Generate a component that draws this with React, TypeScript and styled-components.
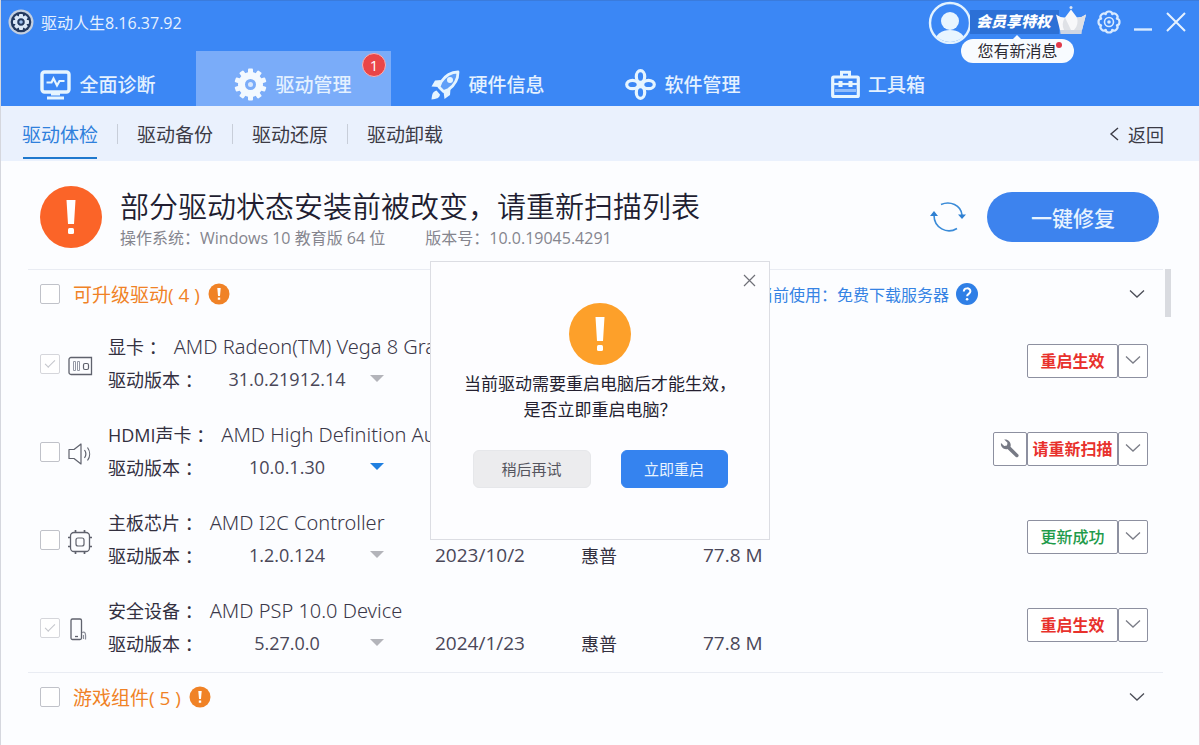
import React from "react";
import styled, { createGlobalStyle, css } from "styled-components";

const GlobalStyle = createGlobalStyle`
  *, *::before, *::after { box-sizing: border-box; }
  body {
    margin: 0;
    background: #fcfdff;
    color: #33303f;
    font-family: "Open Sans", "Noto Sans CJK SC", sans-serif;
  }
  button, input, select { font: inherit; color: inherit; }
  button { cursor: pointer; }
`;

const BLUE = "#3b87f5";

const Window = styled.div`
  position: relative;
  min-height: 100vh;
  border-left: 1px solid #d5d7de;
  border-right: 1px solid #ecd2dc;
  overflow: hidden;
`;

const IconButton = styled.button`
  display: flex;
  align-items: center;
  justify-content: center;
  padding: 0;
  border: 0;
  background: none;
`;

/* ---------- header ---------- */

const Header = styled.header`
  background: ${BLUE};
  border-top: 1px solid #3a7bdc;
  color: #fff;
`;

const TitleBar = styled.div`
  display: flex;
  align-items: center;
  height: 42px;
  padding: 0 12px 0 7px;
`;

const AppName = styled.span`
  margin-left: 7px;
  font-size: 16px;
  color: #e6f1ff;
`;

const Member = styled.div`
  position: relative;
  display: flex;
  align-items: center;
  margin-left: auto;
`;

const MemberLabel = styled.a`
  height: 24px;
  margin-left: -2px;
  padding: 0 8px 0 6px;
  background: #2c70d6;
  color: #fff;
  font-size: 15px;
  font-style: italic;
  font-weight: 900;
  line-height: 23px;
  text-decoration: none;
`;

const Crown = styled.svg`
  margin: -4px 0 0 -4px;
`;

const Bubble = styled.div`
  position: absolute;
  top: 39px;
  left: 33px;
  z-index: 2;
  width: 113px;
  border-radius: 12px;
  background: #f8fbff;
  color: #2c2a33;
  font-size: 16px;
  line-height: 24px;
  text-align: center;

  &::before {
    content: "";
    position: absolute;
    top: -4px;
    left: 51px;
    border: 5px solid transparent;
    border-top: 0;
    border-bottom-color: #f8fbff;
  }
`;

const RedDot = styled.i`
  position: absolute;
  top: 3px;
  right: 12px;
  width: 6px;
  height: 6px;
  border-radius: 50%;
  background: #e0394a;
`;

const WindowTools = styled.div`
  display: flex;
  align-items: center;
  gap: 12px;
  margin-left: 10px;
`;

const Nav = styled.nav`
  display: flex;
  padding-top: 8px;
`;

const NavTab = styled.a<{ $active?: boolean }>`
  position: relative;
  display: flex;
  align-items: center;
  justify-content: center;
  gap: 8px;
  width: 195px;
  height: 55px;
  padding: 12px 1px 0 0;
  background: ${(p) => (p.$active ? "#7aacf9" : "transparent")};
  color: #e4f1ff;
  font-size: 19px;
  line-height: 28px;
  font-weight: 500;
  text-decoration: none;
`;

const Badge = styled.span`
  position: absolute;
  top: 2px;
  right: 5px;
  width: 24px;
  height: 24px;
  border: 1px solid #f6b3b6;
  border-radius: 50%;
  background: #ea4548;
  color: #fff;
  font-size: 15px;
  line-height: 22px;
  text-align: center;
`;

/* ---------- secondary navigation ---------- */

const SubBar = styled.div`
  display: flex;
  align-items: stretch;
  justify-content: space-between;
  height: 55px;
  padding: 0 35px 0 21px;
  background: #eaf1fd;
`;

const SubTabs = styled.nav`
  display: flex;
  align-items: center;
`;

const SubTab = styled.a<{ $active?: boolean }>`
  position: relative;
  height: 55px;
  color: ${(p) => (p.$active ? "#2f80dc" : "#3b3a45")};
  font-size: 19px;
  line-height: 58px;
  text-decoration: none;

  ${(p) =>
    p.$active &&
    css`
      &::after {
        content: "";
        position: absolute;
        right: 1px;
        bottom: 2px;
        left: 1px;
        height: 2px;
        background: #1f78cd;
      }
    `}
`;

const SubDivider = styled.span`
  width: 1px;
  height: 20px;
  margin: 0 19px;
  background: #c8ced9;
`;

const BackLink = styled.a`
  display: flex;
  align-items: center;
  gap: 9px;
  color: #3b3a45;
  font-size: 18px;
  text-decoration: none;
`;

/* ---------- status ---------- */

const Status = styled.section`
  display: flex;
  align-items: center;
  padding: 25px 40px 21px 39px;
`;

const StatusText = styled.div`
  flex: 1;
  margin-left: 18px;
`;

const StatusTitle = styled.h1`
  margin: 0;
  color: #211d31;
  font-size: 29px;
  font-weight: 350;
  line-height: 42px;
`;

const StatusMeta = styled.p`
  display: flex;
  gap: 40px;
  margin: 0;
  color: #85858e;
  font-size: 16px;
  line-height: 20px;
`;

const RepairButton = styled.button`
  width: 172px;
  height: 50px;
  margin-left: 21px;
  border: 0;
  border-radius: 25px;
  background: #3d83ee;
  color: #e8f3ff;
  font-size: 21px;
  font-weight: 500;
`;

/* ---------- driver list ---------- */

const ListArea = styled.main`
  display: flex;
  gap: 2px;
  padding: 0 28px 0 27px;
`;

const List = styled.div`
  flex: 1;
`;

const ScrollThumb = styled.div`
  width: 6px;
  height: 48px;
  background: #d9dbe0;
`;

const GroupHeader = styled.div`
  display: flex;
  align-items: center;
  height: 51px;
  padding: 0 18px 2px 12px;
  border-top: 1px solid #e9ecf3;
`;

const Check = styled.input`
  appearance: none;
  flex: none;
  width: 20px;
  height: 20px;
  margin: 0;
  border: 1px solid #c0c2c9;
  border-radius: 2px;
  background: #fff;

  &:checked {
    border-color: #d5d6db;
  }
  &:checked::before {
    content: "";
    display: block;
    width: 10px;
    height: 5px;
    margin: 5px 0 0 4px;
    border: solid #c4c6cc;
    border-width: 0 0 1px 1px;
    transform: rotate(-45deg);
  }
`;

const GroupName = styled.label`
  margin: 0 8px 0 13px;
  color: #f08226;
  font-size: 19px;
  white-space: pre;
`;

const ServerInfo = styled.div`
  display: flex;
  align-items: center;
  gap: 7px;
  margin-left: auto;
  color: #3583e4;
  font-size: 16px;
`;

const Toggle = styled(IconButton)<{ $gap?: number }>`
  margin-left: ${(p) => (p.$gap ? `${p.$gap}px` : "auto")};
`;

const Row = styled.div`
  display: flex;
  align-items: center;
  height: 88px;
  padding: 0 15px 0 12px;
`;

const DeviceIcon = styled.svg`
  flex: none;
  width: 26px;
  height: 26px;
  margin: 3px 0 0 7px;
  fill: none;
  stroke: #5f626d;
`;

const Info = styled.div`
  flex: 1;
  margin: 0 0 2px 15px;
  min-width: 0;
`;

const Line = styled.div`
  display: grid;
  grid-template-columns: 96px 231px 146px 122px auto;
  align-items: center;
  height: 32px;
  font-size: 18px;
`;

const DeviceTitle = styled.label`
  display: block;
  height: 32px;
  font-size: 18px;
  line-height: 32px;
  white-space: nowrap;
`;

const DeviceName = styled.span`
  margin-left: 7px;
  color: #3a3748;
  font-family: "Noto Sans", "Noto Sans CJK SC", sans-serif;
  font-size: 20px;
  font-weight: 300;
`;

const Amount = styled.span`
  color: #4a4758;
  font-size: 19px;
`;

const VersionBox = styled.div`
  position: relative;
  width: 180px;
  color: #4a4758;
`;

const VersionSelect = styled.select`
  appearance: none;
  display: block;
  width: 100%;
  height: 32px;
  padding: 0 14px 0 0;
  border: 0;
  background: none;
  text-align: center;
  text-align-last: center;
`;

const VersionArrow = styled.i<{ $on?: boolean }>`
  position: absolute;
  top: 12px;
  right: 0;
  border: 7px solid transparent;
  border-top-color: ${(p) => (p.$on ? "#1f7fe0" : "#b3b4ba")};
  border-bottom: 0;
  pointer-events: none;
`;

const Actions = styled.div`
  display: flex;
  margin-bottom: 6px;
`;

const ActionButton = styled.button<{ $tone?: "red" | "green"; $w: number }>`
  display: flex;
  align-items: center;
  justify-content: center;
  width: ${(p) => p.$w}px;
  height: 34px;
  padding: 0 0 2px;
  border: 1px solid #8d90a0;
  border-radius: 2px;
  background: #fff;
  color: ${(p) => (p.$tone === "green" ? "#1f9b4b" : "#e8312c")};
  font-size: 16px;
  font-weight: ${(p) => (p.$tone === "red" ? 700 : 500)};
`;

/* ---------- dialog ---------- */

const Overlay = styled.div`
  position: absolute;
  inset: 0;
  display: flex;
  align-items: flex-start;
  justify-content: center;
  padding-top: 261px;
  pointer-events: none;
`;

const Dialog = styled.div`
  position: relative;
  display: flex;
  flex-direction: column;
  align-items: center;
  width: 340px;
  padding: 41px 0 51px;
  border: 1px solid #dcdde3;
  background: #fdfdff;
  pointer-events: auto;
`;

const DialogClose = styled(IconButton)`
  position: absolute;
  top: 12px;
  right: 13px;
`;

const DialogText = styled.p`
  margin: 6px 0 0;
  color: #241f30;
  font-size: 17px;
  line-height: 26px;
  text-align: center;
  white-space: pre-line;
`;

const DialogButtons = styled.div`
  display: flex;
  gap: 30px;
  margin-top: 27px;
`;

const DialogButton = styled.button<{ $primary?: boolean }>`
  width: ${(p) => (p.$primary ? 107 : 118)}px;
  height: 38px;
  padding: 0 0 2px;
  border: 1px solid ${(p) => (p.$primary ? "#3583ef" : "#e6e7ea")};
  border-radius: 6px;
  background: ${(p) => (p.$primary ? "#3583ef" : "#ececee")};
  color: ${(p) => (p.$primary ? "#e8f3ff" : "#55555e")};
  font-size: 15px;
`;

/* ---------- drawings ---------- */

const Alert = ({ size, color }: { size: number; color: string }) => (
  <svg width={size} height={size} viewBox="0 0 62 62" aria-hidden="true">
    <circle cx="31" cy="31" r="31" fill={color} />
    <path d="M26.500 14h9l-1.500 24h-6z" fill="#fff" />
    <rect x="28" y="42" width="6" height="6" rx="1.500" fill="#fff" />
  </svg>
);

const SmallAlert = () => (
  <svg width="22" height="22" viewBox="0 0 22 22" aria-hidden="true">
    <circle cx="11" cy="11" r="10.500" fill="#f08226" />
    <path d="M9.300 5h3.400l-.7 8h-2zM9.800 14.400h2.400v2.400H9.800z" fill="#fff" />
  </svg>
);

const Chevron = ({ color = "#4b4d57" }: { color?: string }) => (
  <svg width="16" height="10" viewBox="0 0 16 10" aria-hidden="true">
    <path d="M1 1.500l7 6.500 7-6.500" fill="none" stroke={color} strokeWidth="1.300" />
  </svg>
);

const teeth = (n: number, cx: number, cy: number, r: number, w: number, h: number) =>
  Array.from({ length: n }, (_, i) => (
    <rect
      key={i}
      x={cx - w / 2}
      y={cy - r}
      width={w}
      height={h}
      rx="1"
      transform={`rotate(${(i * 360) / n} ${cx} ${cy})`}
    />
  ));

const Logo = () => (
  <svg width="26" height="26" viewBox="0 0 26 26" aria-hidden="true">
    <circle cx="13" cy="13" r="12.500" fill="#c5d0e0" />
    <circle cx="13" cy="13" r="10.300" fill="#23395f" />
    <g fill="#dbe8f8">{teeth(8, 13, 13, 8, 4, 4)}</g>
    <circle cx="13" cy="13" r="5" fill="none" stroke="#dbe8f8" strokeWidth="2.500" />
    <circle cx="13" cy="13" r="1.800" fill="#9fc0ee" />
  </svg>
);

const Avatar = () => (
  <svg width="44" height="44" viewBox="0 0 44 44" aria-hidden="true">
    <defs>
      <clipPath id="face">
        <circle cx="22" cy="23" r="19" />
      </clipPath>
    </defs>
    <circle cx="22" cy="23" r="20" fill={BLUE} stroke="#e2f2ff" strokeWidth="2.400" />
    <g fill="#e8f5ff" clipPath="url(#face)">
      <circle cx="22" cy="21" r="9" />
      <ellipse cx="22" cy="41" rx="15" ry="11" />
    </g>
  </svg>
);

const CrownIcon = () => (
  <Crown width="32" height="32" viewBox="0 0 32 32" aria-hidden="true">
    <path d="M5 26L1 10.500q5 3.500 9 3l6-8 6 8q4 .5 9-3L27 26z" fill="#f8f8fa" />
    <path d="M22 13.500q4 .5 9-3L27 26h-8q5-5 3-12.500zM10 13.500L16 26H9q-3-6 1-12.500z" fill="#dfe1e6" />
    <path d="M5 26h22l-.5 4h-21z" fill="#cfd6e4" />
    <circle cx="16" cy="3.500" r="1.500" fill="#dfe6f2" />
  </Crown>
);

/* Outline of a wheel with eight rounded lobes. */
const lobes = Array.from({ length: 8 }, (_, i) => {
  const at = (deg: number, r: number) => {
    const a = (deg * Math.PI) / 180;
    return `${(12 + r * Math.cos(a)).toFixed(2)} ${(12 + r * Math.sin(a)).toFixed(2)}`;
  };
  const start = i * 45 - 22.5;
  return `${i === 0 ? `M${at(start, 8.500)}` : ""}Q${at(start + 6, 11)} ${at(start + 22.5, 10.500)}Q${at(start + 39, 11)} ${at(start + 45, 8.500)}`;
}).join("");

const SettingsIcon = () => (
  <svg width="24" height="24" viewBox="0 0 24 24" fill="none" stroke="#d8eaff" aria-hidden="true">
    <path d={`${lobes}Z`} strokeWidth="2.200" strokeLinejoin="round" />
    <circle cx="12" cy="12" r="4.500" strokeWidth="1.600" />
    <circle cx="12" cy="12" r="1.800" fill="#d8eaff" stroke="none" />
  </svg>
);

const MonitorIcon = () => (
  <svg width="31" height="30" viewBox="0 0 31 30" fill="none" stroke="#e6f5ff" aria-hidden="true">
    <rect x="2" y="2" width="27" height="20" rx="2.500" strokeWidth="3.400" />
    <path d="M6.500 12.500h5l2-4 3.500 7 2.500-4.500h5" strokeWidth="2.200" />
    <path d="M11 24h9M7 28h17" strokeWidth="3" />
  </svg>
);

const GearIcon = () => (
  <svg width="33" height="33" viewBox="0 0 33 33" aria-hidden="true">
    <g fill="#f3f9ff">{teeth(10, 16.5, 16.5, 16, 5, 8)}</g>
    <circle cx="16.500" cy="16.500" r="9" fill="none" stroke="#f3f9ff" strokeWidth="7" />
    <circle cx="16.500" cy="16.500" r="2.500" fill="#d8e8ff" />
  </svg>
);

const RocketIcon = () => (
  <svg width="29" height="30" viewBox="0 0 29 30" aria-hidden="true">
    <path
      d="M27 2c-8 0-13 4-17 10l-2 5 4.500 4.500 5-2C24 15 27 10 27 2z"
      fill="#5f9ff8"
      stroke="#e6f5ff"
      strokeWidth="2.800"
      strokeLinejoin="round"
    />
    <path d="M10 10l-6 .5-3.500 6 7 .5zM19.500 19l-.5 6-5.500 4-1-7.500z" fill="#e6f5ff" />
    <circle cx="19" cy="10" r="3" fill="#e6f5ff" />
    <path d="M5.500 20.500c-4 1-4.500 4-5 9 5-.5 8-1.500 8.500-5z" fill="#e6f5ff" />
  </svg>
);

const PetalIcon = () => (
  <svg width="31" height="31" viewBox="0 0 31 31" fill="none" stroke="#e6f5ff" strokeWidth="3.200" aria-hidden="true">
    <ellipse cx="15.500" cy="7.500" rx="4.200" ry="5.800" />
    <ellipse cx="15.500" cy="23.500" rx="4.200" ry="5.800" />
    <ellipse cx="7.500" cy="15.500" rx="5.800" ry="4.200" />
    <ellipse cx="23.500" cy="15.500" rx="5.800" ry="4.200" />
    <circle cx="15.500" cy="15.500" r="3" fill="#e6f5ff" stroke="none" />
  </svg>
);

const ToolboxIcon = () => (
  <svg width="29" height="29" viewBox="0 0 29 29" fill="none" stroke="#e6f5ff" aria-hidden="true">
    <path d="M10.500 6V2.200h8V6" strokeWidth="3" />
    <rect x="1.700" y="7" width="25.600" height="19.500" rx="1" strokeWidth="3.200" />
    <path d="M3 14h23" strokeWidth="2.200" />
    <path d="M9.500 11v6M19.500 11v6" strokeWidth="4" />
    <path d="M4 20.500h21" stroke="#8fbcfb" strokeWidth="3" />
  </svg>
);

const RefreshIcon = () => (
  <svg width="36" height="32" viewBox="0 0 36 32" aria-hidden="true">
    <g fill="none" stroke="#3a8bd8" strokeWidth="1.600">
      <path d="M11 3.500C20-.5 31 4 32 14" />
      <path d="M27 27.500C17 33.500 4 27 4 14" />
    </g>
    <path d="M28 13.500h8L32 18zM0 15h8L4 10z" fill="#2f80d2" />
  </svg>
);

const CardGlyph = () => (
  <>
    <path d="M4 4.500h20.500v17H4a2 2 0 0 1-2-2v-13a2 2 0 0 1 2-2z" strokeWidth="1.300" />
    <path d="M6.500 8.500h2v9h-2zM10.500 8.500h2v9h-2z" stroke="#9498a5" />
    <rect x="16.500" y="10.500" width="5" height="6" rx="1.500" strokeWidth="1.200" />
  </>
);

const SpeakerGlyph = () => (
  <>
    <path d="M2 8.500h5l7-5.500v20l-7-5.500H2z" strokeWidth="1.200" strokeLinejoin="round" />
    <path d="M17.500 9a7 7 0 0 1 0 8M20.500 6.500a11 11 0 0 1 0 13" strokeWidth="1.200" />
  </>
);

const ChipGlyph = () => (
  <>
    <rect x="3.500" y="3.500" width="19" height="19" rx="3.500" strokeWidth="1.300" />
    <rect x="9" y="9" width="8" height="8" rx="2" strokeWidth="1.200" />
    <path
      d="M8.500 3.500V1M17.500 3.500V1M8.500 25v-2.500M17.500 25v-2.500M3.500 8.500H1M3.500 17.500H1M25 8.500h-2.500M25 17.500h-2.500"
      strokeWidth="1.700"
    />
  </>
);

const PhoneGlyph = () => (
  <>
    <rect x="4" y="2" width="10.500" height="20.500" rx="1.500" strokeWidth="1.300" />
    <path d="M8 19.500h3" strokeWidth="1.300" />
    <path d="M15 15.500c3-1.500 4 .5 3.500 7M16.500 18v4" stroke="#8b8e99" strokeWidth="1.200" />
  </>
);

const WrenchIcon = () => (
  <svg width="20" height="20" viewBox="0 0 20 20" aria-hidden="true">
    <path
      d="M4.200 1.600l3.300 3.200-.5 2.700-2.800.4L1 5C.3 8.500 3.300 12 7.500 11l8.600 8.200c1.600.6 3-1 2.400-2.400L10.500 8.700C11.700 4.500 8 .8 4.200 1.600z"
      fill="#777a85"
    />
  </svg>
);

/* ---------- data ---------- */

const navTabs = [
  { label: "全面诊断", icon: <MonitorIcon /> },
  { label: "驱动管理", icon: <GearIcon />, active: true, badge: 1 },
  { label: "硬件信息", icon: <RocketIcon /> },
  { label: "软件管理", icon: <PetalIcon /> },
  { label: "工具箱", icon: <ToolboxIcon /> },
];

const subTabs = ["驱动体检", "驱动备份", "驱动还原", "驱动卸载"];

type Driver = {
  kind: string;
  name: string;
  version: string;
  glyph: React.ReactNode;
  action: string;
  tone: "red" | "green";
  locked?: boolean;
  newer?: boolean;
  repair?: boolean;
  date?: string;
  vendor?: string;
  size?: string;
};

const drivers: Driver[] = [
  { kind: "显卡", name: "AMD Radeon(TM) Vega 8 Graphics", version: "31.0.21912.14", glyph: <CardGlyph />, action: "重启生效", tone: "red", locked: true },
  { kind: "HDMI声卡", name: "AMD High Definition Audio", version: "10.0.1.30", glyph: <SpeakerGlyph />, action: "请重新扫描", tone: "red", newer: true, repair: true },
  { kind: "主板芯片", name: "AMD I2C Controller", version: "1.2.0.124", glyph: <ChipGlyph />, action: "更新成功", tone: "green", date: "2023/10/2", vendor: "惠普", size: "77.8 M" },
  { kind: "安全设备", name: "AMD PSP 10.0 Device", version: "5.27.0.0", glyph: <PhoneGlyph />, action: "重启生效", tone: "red", locked: true, date: "2024/1/23", vendor: "惠普", size: "77.8 M" },
];

const DriverRow = ({ d, id }: { d: Driver; id: string }) => (
  <Row>
    <Check type="checkbox" id={id} defaultChecked={d.locked} disabled={d.locked} />
    <DeviceIcon viewBox="0 0 26 26" aria-hidden="true">
      {d.glyph}
    </DeviceIcon>
    <Info>
      <DeviceTitle htmlFor={id}>
        {d.kind} ：<DeviceName>{d.name}</DeviceName>
      </DeviceTitle>
      <Line>
        <label htmlFor={`${id}-version`}>驱动版本 ：</label>
        <VersionBox>
          <VersionSelect id={`${id}-version`}>
            <option>{d.version}</option>
          </VersionSelect>
          <VersionArrow $on={d.newer} />
        </VersionBox>
        <Amount>{d.date}</Amount>
        <span>{d.vendor}</span>
        <Amount>{d.size}</Amount>
      </Line>
    </Info>
    <Actions>
      {d.repair && (
        <ActionButton $w={34} aria-label="修复">
          <WrenchIcon />
        </ActionButton>
      )}
      <ActionButton $w={91} $tone={d.tone}>
        {d.action}
      </ActionButton>
      <ActionButton $w={30} aria-label="更多">
        <Chevron color="#7b7d87" />
      </ActionButton>
    </Actions>
  </Row>
);

export default function App() {
  return (
    <Window>
      <GlobalStyle />
      <Header>
        <TitleBar>
          <Logo />
          <AppName>驱动人生8.16.37.92</AppName>
          <Member>
            <Avatar />
            <MemberLabel href="#member">会员享特权</MemberLabel>
            <CrownIcon />
            <Bubble>
              您有新消息
              <RedDot />
            </Bubble>
          </Member>
          <WindowTools>
            <IconButton aria-label="设置">
              <SettingsIcon />
            </IconButton>
            <IconButton aria-label="最小化">
              <svg width="20" height="20" viewBox="0 0 20 20" aria-hidden="true">
                <path d="M1 17.500h18" stroke="#d8eaff" strokeWidth="2.400" />
              </svg>
            </IconButton>
            <IconButton aria-label="关闭">
              <svg width="22" height="22" viewBox="0 0 22 22" aria-hidden="true">
                <path d="M2 2l18 18M20 2L2 20" stroke="#e6f2ff" strokeWidth="2" />
              </svg>
            </IconButton>
          </WindowTools>
        </TitleBar>
        <Nav>
          {navTabs.map((t) => (
            <NavTab key={t.label} href="#" $active={t.active}>
              {t.icon}
              {t.label}
              {t.badge && <Badge>{t.badge}</Badge>}
            </NavTab>
          ))}
        </Nav>
      </Header>

      <SubBar>
        <SubTabs>
          {subTabs.map((label, i) => (
            <React.Fragment key={label}>
              {i > 0 && <SubDivider />}
              <SubTab href="#" $active={i === 0}>
                {label}
              </SubTab>
            </React.Fragment>
          ))}
        </SubTabs>
        <BackLink href="#">
          <svg width="10" height="14" viewBox="0 0 10 14" aria-hidden="true">
            <path d="M9 1L2 7l7 6" fill="none" stroke="#3b3a45" strokeWidth="1.400" />
          </svg>
          返回
        </BackLink>
      </SubBar>

      <Status>
        <Alert size={62} color="#fb6428" />
        <StatusText>
          <StatusTitle>部分驱动状态安装前被改变，请重新扫描列表</StatusTitle>
          <StatusMeta>
            <span>操作系统：Windows 10 教育版 64 位</span>
            <span>版本号：10.0.19045.4291</span>
          </StatusMeta>
        </StatusText>
        <IconButton aria-label="重新扫描">
          <RefreshIcon />
        </IconButton>
        <RepairButton>一键修复</RepairButton>
      </Status>

      <ListArea>
        <List>
          <GroupHeader>
            <Check type="checkbox" id="upgradable" />
            <GroupName htmlFor="upgradable">可升级驱动( 4 )</GroupName>
            <SmallAlert />
            <ServerInfo>
              当前使用：免费下载服务器
              <svg width="22" height="22" viewBox="0 0 22 22" aria-hidden="true">
                <circle cx="11" cy="11" r="11" fill="#2f7fe6" />
                <path d="M7.800 8.600c0-4.300 6.600-4.200 6.600-.3 0 2.600-3.300 2.500-3.300 5" fill="none" stroke="#fff" strokeWidth="2" />
                <circle cx="11.100" cy="16.200" r="1.300" fill="#fff" />
              </svg>
            </ServerInfo>
            <Toggle $gap={151} aria-label="收起">
              <Chevron />
            </Toggle>
          </GroupHeader>
          {drivers.map((d, i) => (
            <DriverRow key={d.kind} d={d} id={`driver-${i}`} />
          ))}
          <GroupHeader>
            <Check type="checkbox" id="games" />
            <GroupName htmlFor="games">游戏组件( 5 )</GroupName>
            <SmallAlert />
            <Toggle aria-label="展开">
              <Chevron />
            </Toggle>
          </GroupHeader>
        </List>
        <ScrollThumb />
      </ListArea>

      <Overlay>
        <Dialog role="dialog" aria-modal="true" aria-labelledby="restart-text">
          <DialogClose aria-label="关闭">
            <svg width="13" height="13" viewBox="0 0 13 13" aria-hidden="true">
              <path d="M1 1l11 11M12 1L1 12" stroke="#6f7078" strokeWidth="1.200" />
            </svg>
          </DialogClose>
          <Alert size={62} color="#fda02a" />
          <DialogText id="restart-text">{"当前驱动需要重启电脑后才能生效，\n是否立即重启电脑？"}</DialogText>
          <DialogButtons>
            <DialogButton>稍后再试</DialogButton>
            <DialogButton $primary>立即重启</DialogButton>
          </DialogButtons>
        </Dialog>
      </Overlay>
    </Window>
  );
}
